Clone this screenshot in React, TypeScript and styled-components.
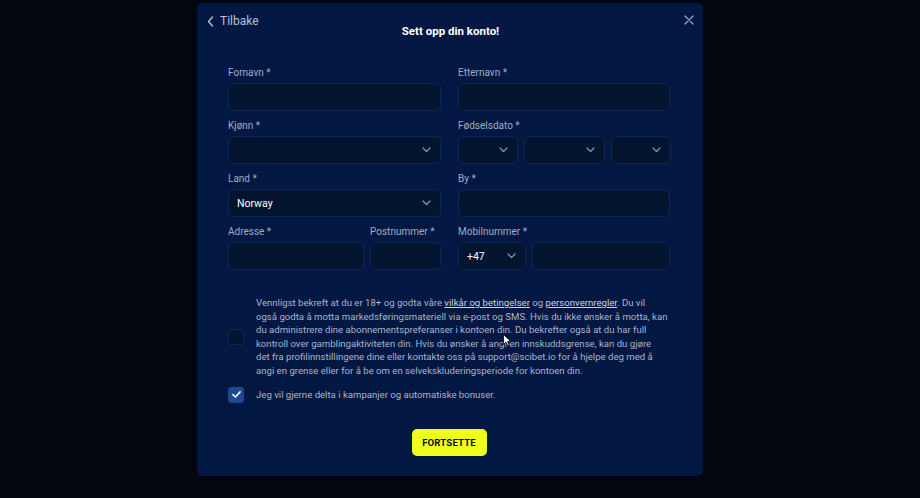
import { createGlobalStyle } from 'styled-components'
import styled from 'styled-components'

const GlobalStyle = createGlobalStyle`
    html, body {
        margin: 0;
        padding: 0;
        background: #03060f;
        font-family: 'Roboto', 'Liberation Sans', sans-serif;
    }
`

const Page = styled.div`
    width: 920px;
    height: 498px;
    padding: 3px 0 0 197px;
    box-sizing: border-box;
    position: relative;
    overflow: hidden;
`

const Modal = styled.div`
    width: 506px;
    height: 473px;
    background: #021842;
    border-radius: 5px;
    box-sizing: border-box;
    display: flex;
    flex-direction: column;
`

const Header = styled.div`
    display: grid;
    grid-template-columns: 1fr auto 1fr;
    padding: 10px 9px 0 10px;
    height: 41px;
    box-sizing: border-box;
`

const Back = styled.div`
    display: flex;
    align-items: center;
    gap: 6px;
    color: #b6c0d6;
    font-size: 12px;
    height: 16px;
    justify-self: start;
`

const Title = styled.h1`
    margin: 11px 0 0;
    color: #ffffff;
    font-size: 11.5px;
    font-weight: 700;
    line-height: 14px;
`

const Close = styled.div`
    justify-self: end;
    height: 14px;
    display: flex;
    align-items: center;
`

const Form = styled.div`
    padding: 23px 33px 0 31px;
    display: flex;
    flex-direction: column;
    gap: 9px;
`

const Row = styled.div`
    display: grid;
    grid-template-columns: 213px 212px;
    column-gap: 17px;
`

const Field = styled.div`
    display: flex;
    flex-direction: column;
`

const Label = styled.label`
    color: #9eadc8;
    font-size: 10px;
    line-height: 12px;
    height: 12px;
    margin-bottom: 4px;
    white-space: nowrap;
`

const Group = styled.div<{ $cols: string }>`
    display: grid;
    grid-template-columns: ${p => p.$cols};
    column-gap: 6px;
`

const Box = styled.div`
    height: 28px;
    box-sizing: border-box;
    background: #03142f;
    border: 1px solid #0c285a;
    border-radius: 5px;
    display: flex;
    align-items: center;
    justify-content: space-between;
    padding: 0 9px 0 8px;
    color: #ffffff;
    font-size: 10.5px;
`

const Consent = styled.div`
    margin-top: 26px;
    padding: 0 33px 0 31px;
    display: grid;
    grid-template-columns: 16px 1fr;
    column-gap: 12px;
    row-gap: 9px;
    align-items: center;
`

const Check = styled.div<{ $on?: boolean }>`
    width: 16px;
    height: 16px;
    box-sizing: border-box;
    border-radius: 3px;
    background: ${p => (p.$on ? '#1d4a8e' : '#03142f')};
    border: 1px solid ${p => (p.$on ? '#1d4a8e' : '#0c285a')};
    display: flex;
    align-items: center;
    justify-content: center;
`

const Text = styled.p`
    margin: 0;
    color: #a9b5cd;
    font-size: 9.6px;
    line-height: 13.6px;
    white-space: nowrap;
`

const Link = styled.span`
    color: #cbd4e6;
    text-decoration: underline;
`

const Actions = styled.div`
    display: flex;
    justify-content: center;
    margin-top: 26px;
    padding-right: 2px;
`

const Button = styled.button`
    width: 75px;
    height: 27px;
    background: #eeff1e;
    border: none;
    border-radius: 5px;
    color: #0b0b0b;
    font-family: 'Roboto', 'Liberation Sans', sans-serif;
    font-size: 9.5px;
    font-weight: 700;
    letter-spacing: 0.2px;
`

const Cursor = styled.svg`
    position: absolute;
    left: 503px;
    top: 334px;
`

function Chevron() {
    return (
        <svg width="9" height="6" viewBox="0 0 9 6" fill="none">
            <path d="M1 1L4.5 4.5L8 1" stroke="#8796b4" strokeWidth="1.2" strokeLinecap="round" strokeLinejoin="round" />
        </svg>
    )
}

function Select({ value }: { value?: string }) {
    return (
        <Box>
            <span>{value}</span>
            <Chevron />
        </Box>
    )
}

export default function App() {
    return (
        <>
            <GlobalStyle />
            <Page>
                <Modal>
                    <Header>
                        <Back>
                            <svg width="7" height="11" viewBox="0 0 7 11" fill="none">
                                <path d="M5.5 1L1.5 5.5L5.5 10" stroke="#b6c0d6" strokeWidth="1.4" strokeLinecap="round" strokeLinejoin="round" />
                            </svg>
                            Tilbake
                        </Back>
                        <Title>Sett opp din konto!</Title>
                        <Close>
                            <svg width="10" height="10" viewBox="0 0 10 10" fill="none">
                                <path d="M1 1L9 9M9 1L1 9" stroke="#8fa0c0" strokeWidth="1.4" strokeLinecap="round" />
                            </svg>
                        </Close>
                    </Header>
                    <Form>
                        <Row>
                            <Field>
                                <Label>Fornavn *</Label>
                                <Box />
                            </Field>
                            <Field>
                                <Label>Etternavn *</Label>
                                <Box />
                            </Field>
                        </Row>
                        <Row>
                            <Field>
                                <Label>Kjønn *</Label>
                                <Select />
                            </Field>
                            <Field>
                                <Label>Fødselsdato *</Label>
                                <Group $cols="60px 81px 60px">
                                    <Select />
                                    <Select />
                                    <Select />
                                </Group>
                            </Field>
                        </Row>
                        <Row>
                            <Field>
                                <Label>Land *</Label>
                                <Select value="Norway" />
                            </Field>
                            <Field>
                                <Label>By *</Label>
                                <Box />
                            </Field>
                        </Row>
                        <Row>
                            <Group $cols="136px 71px">
                                <Field>
                                    <Label>Adresse *</Label>
                                    <Box />
                                </Field>
                                <Field>
                                    <Label>Postnummer *</Label>
                                    <Box />
                                </Field>
                            </Group>
                            <Field>
                                <Label>Mobilnummer *</Label>
                                <Group $cols="68px 138px">
                                    <Select value="+47" />
                                    <Box />
                                </Group>
                            </Field>
                        </Row>
                    </Form>
                    <Consent>
                        <Check />
                        <Text>
                            Vennligst bekreft at du er 18+ og godta våre <Link>vilkår og betingelser</Link> og <Link>personvernregler</Link>. Du vil<br />
                            også godta å motta markedsføringsmateriell via e-post og SMS. Hvis du ikke ønsker å motta, kan<br />
                            du administrere dine abonnementspreferanser i kontoen din. Du bekrefter også at du har full<br />
                            kontroll over gamblingaktiviteten din. Hvis du ønsker å angi en innskuddsgrense, kan du gjøre<br />
                            det fra profilinnstillingene dine eller kontakte oss på support@scibet.io for å hjelpe deg med å<br />
                            angi en grense eller for å be om en selvekskluderingsperiode for kontoen din.
                        </Text>
                        <Check $on>
                            <svg width="9" height="7" viewBox="0 0 9 7" fill="none">
                                <path d="M1 3.6L3.4 6L8 1" stroke="#ffffff" strokeWidth="1.7" strokeLinecap="round" strokeLinejoin="round" />
                            </svg>
                        </Check>
                        <Text>Jeg vil gjerne delta i kampanjer og automatiske bonuser.</Text>
                    </Consent>
                    <Actions>
                        <Button>FORTSETTE</Button>
                    </Actions>
                </Modal>
                <Cursor width="9" height="13" viewBox="0 0 9 13">
                    <path d="M0.5 0.5L0.5 10.5L3 8.2L4.8 12L6.3 11.3L4.6 7.6L8 7.6Z" fill="#ffffff" stroke="#000000" strokeWidth="0.8" />
                </Cursor>
            </Page>
        </>
    )
}
